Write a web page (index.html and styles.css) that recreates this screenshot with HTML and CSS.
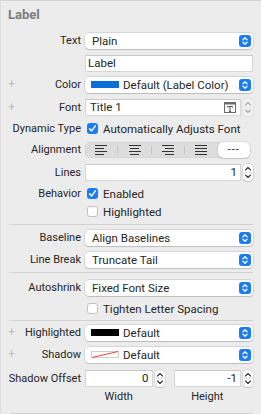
FILE: index.html
```html
<!DOCTYPE html>
<html lang="en">

<head>
    <meta charset="UTF-8">
    <meta name="viewport" content="width=device-width, initial-scale=1.0">
    <title>Attributes Inspector</title>

    <link rel="stylesheet" href="styles.css">
</head>

<body>
    <div class="inspector">
        <h2 class="title">Label</h2>

        <div class="row">
            <span class="name">Text</span>
            <div class="popup"><span class="value">Plain</span><span class="arrows"></span></div>
        </div>
        <div class="row gap-6">
            <span class="name"></span>
            <div class="field">Label</div>
        </div>
        <div class="row gap-4">
            <span class="name"><i class="plus">+</i>Color</span>
            <div class="popup"><span class="swatch blue"></span><span class="value">Default (Label Color)</span><span class="arrows"></span></div>
        </div>
        <div class="row gap-6">
            <span class="name"><i class="plus">+</i>Font</span>
            <div class="with-stepper">
                <div class="field font-field">Title 1
                    <svg class="t-icon" width="12" height="11" viewBox="0 0 12 11">
                        <rect x="0.5" y="0.5" width="11" height="10" fill="#fff" stroke="#6b6b6b" />
                        <rect x="0.5" y="0.5" width="11" height="2" fill="#6b6b6b" />
                        <path d="M3.5 4.5h5M6 4.5v5M5 9.5h2M3.5 4.5v1M8.5 4.5v1" stroke="#555" fill="none" />
                    </svg>
                </div>
                <span class="stepper disabled"></span>
            </div>
        </div>
        <div class="row gap-4">
            <span class="name">Dynamic Type</span>
            <label class="check"><span class="box on"></span>Automatically Adjusts Font</label>
        </div>
        <div class="row gap-4">
            <span class="name">Alignment</span>
            <div class="segmented">
                <span class="seg"><span class="lines left"><i></i><i></i><i></i><i></i></span></span>
                <span class="seg"><span class="lines center"><i></i><i></i><i></i><i></i></span></span>
                <span class="seg"><span class="lines right"><i></i><i></i><i></i><i></i></span></span>
                <span class="seg"><span class="lines justify"><i></i><i></i><i></i><i></i></span></span>
                <span class="seg selected">---</span>
            </div>
        </div>
        <div class="row gap-6">
            <span class="name">Lines</span>
            <div class="with-stepper">
                <div class="field num">1</div>
                <span class="stepper"></span>
            </div>
        </div>
        <div class="row gap-4">
            <span class="name">Behavior</span>
            <label class="check"><span class="box on"></span>Enabled</label>
        </div>
        <div class="row gap-1">
            <span class="name"></span>
            <label class="check"><span class="box"></span>Highlighted</label>
        </div>

        <hr class="sep">

        <div class="row gap-4">
            <span class="name">Baseline</span>
            <div class="popup"><span class="value">Align Baselines</span><span class="arrows"></span></div>
        </div>
        <div class="row">
            <span class="name">Line Break</span>
            <div class="popup"><span class="value">Truncate Tail</span><span class="arrows"></span></div>
        </div>

        <hr class="sep">

        <div class="row gap-6">
            <span class="name">Autoshrink</span>
            <div class="popup"><span class="value">Fixed Font Size</span><span class="arrows"></span></div>
        </div>
        <div class="row gap-4">
            <span class="name"></span>
            <label class="check"><span class="box"></span>Tighten Letter Spacing</label>
        </div>

        <hr class="sep short">

        <div class="row gap-3">
            <span class="name"><i class="plus">+</i>Highlighted</span>
            <div class="popup"><span class="swatch black"></span><span class="value">Default</span><span class="arrows"></span></div>
        </div>
        <div class="row">
            <span class="name"><i class="plus">+</i>Shadow</span>
            <div class="popup">
                <svg class="swatch" width="28" height="7" viewBox="0 0 28 7">
                    <rect x="0.5" y="0.5" width="27" height="6" fill="#fff" stroke="#cfcfcf" />
                    <path d="M1 6.5L27 0.5" stroke="#f0403a" stroke-width="1" />
                </svg>
                <span class="value">Default</span><span class="arrows"></span>
            </div>
        </div>
        <div class="row gap-7">
            <span class="name">Shadow Offset</span>
            <div class="pair">
                <div class="with-stepper">
                    <div class="field num">0</div>
                    <span class="stepper"></span>
                </div>
                <div class="with-stepper">
                    <div class="field num">-1</div>
                    <span class="stepper"></span>
                </div>
            </div>
        </div>
        <div class="row captions">
            <span class="name"></span>
            <div class="pair">
                <span class="caption">Width</span>
                <span class="caption">Height</span>
            </div>
        </div>

        <hr class="sep bottom">
    </div>
</body>

</html>
```

FILE: styles.css
```css
body {
    margin: 0;
    background-color: #ececec;
    font-family: Roboto, "Liberation Sans", sans-serif;
    color: #262626;
}

.inspector {
    width: 261px;
    height: 414px;
    box-sizing: border-box;
    border-top: 1px solid #d3d3d3;
    border-left: 1px solid #dedede;
    padding: 0 8px 0 0;
    overflow: hidden;
}

.title {
    margin: 0;
    padding: 6px 0 0 7px;
    height: 20px;
    font-size: 13px;
    font-weight: 700;
    color: #7d7d7d;
}

.row {
    display: grid;
    grid-template-columns: 80px 1fr;
    column-gap: 4px;
    align-items: center;
    height: 17px;
    margin-top: 5px;
}

.gap-1 { margin-top: 1px; }
.gap-3 { margin-top: 3px; }
.gap-4 { margin-top: 4px; }
.gap-6 { margin-top: 6px; }
.gap-7 { margin-top: 7px; }

.name {
    position: relative;
    text-align: right;
    font-size: 11px;
    white-space: nowrap;
}

.plus {
    position: absolute;
    left: 7px;
    top: -2px;
    font-style: normal;
    font-size: 13px;
    font-weight: 300;
    color: #a8a8a8;
}

.popup {
    display: flex;
    align-items: center;
    height: 16px;
    background-color: #fff;
    border-radius: 4px;
    box-shadow: 0 0 0 0.5px rgba(0, 0, 0, 0.18), 0 1px 1px rgba(0, 0, 0, 0.12);
    padding-left: 7px;
    font-size: 11.5px;
}

.value {
    flex: 1;
    white-space: nowrap;
}

.arrows {
    width: 12px;
    height: 12px;
    margin-right: 2px;
    border-radius: 3px;
    background-color: #1a7cf5;
    background-image: url("data:image/svg+xml,%3Csvg xmlns='http://www.w3.org/2000/svg' width='12' height='12' viewBox='0 0 12 12'%3E%3Cpath d='M4 4.8l2-2 2 2M4 7.2l2 2 2-2' stroke='white' stroke-width='1.3' fill='none' stroke-linecap='round' stroke-linejoin='round'/%3E%3C/svg%3E");
}

.swatch {
    display: block;
    width: 28px;
    height: 7px;
    margin-right: 4px;
    margin-left: -1px;
}

.swatch.blue {
    background-color: #0a6fd8;
}

.swatch.black {
    background-color: #000;
}

.field {
    box-sizing: border-box;
    height: 17px;
    background-color: #fff;
    border: 1px solid #d6d6d6;
    border-top-color: #c9c9c9;
    padding: 0 3px 0 2px;
    font-size: 11.5px;
    line-height: 15px;
}

.with-stepper {
    display: flex;
    align-items: center;
    gap: 2px;
}

.with-stepper .field {
    flex: 1;
}

.font-field {
    display: flex;
    align-items: center;
    justify-content: space-between;
    padding: 0 4px;
}

.t-icon {
    display: block;
}

.num {
    text-align: right;
}

.stepper {
    width: 10px;
    height: 17px;
    box-sizing: border-box;
    border-radius: 4px;
    background-color: #fff;
    box-shadow: 0 0 0 0.5px rgba(0, 0, 0, 0.2), 0 1px 1px rgba(0, 0, 0, 0.1);
    background-image: url("data:image/svg+xml,%3Csvg xmlns='http://www.w3.org/2000/svg' width='10' height='17' viewBox='0 0 10 17'%3E%3Cpath d='M2.5 6l2.5-2.5L7.5 6M2.5 11l2.5 2.5 2.5-2.5' stroke='%23333' stroke-width='1.1' fill='none' stroke-linecap='round' stroke-linejoin='round'/%3E%3Cpath d='M1 8.5h8' stroke='%23ddd' stroke-width='1'/%3E%3C/svg%3E");
}

.stepper.disabled {
    opacity: 0.35;
}

.check {
    display: flex;
    align-items: center;
    gap: 5px;
    padding-left: 2px;
    font-size: 11.5px;
    white-space: nowrap;
}

.box {
    width: 11px;
    height: 11px;
    box-sizing: border-box;
    border-radius: 3px;
    background-color: #fff;
    border: 1px solid #c3c3c3;
}

.box.on {
    border: none;
    background-color: #1a7cf5;
    background-image: url("data:image/svg+xml,%3Csvg xmlns='http://www.w3.org/2000/svg' width='11' height='11' viewBox='0 0 11 11'%3E%3Cpath d='M2.6 5.8l2 2.1 3.8-5' stroke='white' stroke-width='1.5' fill='none' stroke-linecap='round' stroke-linejoin='round'/%3E%3C/svg%3E");
}

.segmented {
    display: flex;
    height: 16px;
    margin-right: 3px;
    border-radius: 5px;
    background-color: #dddddd;
    box-shadow: inset 0 0 0 0.5px rgba(0, 0, 0, 0.06);
}

.seg {
    flex: 1;
    display: flex;
    align-items: center;
    justify-content: center;
    border-right: 1px solid #c6c6c6;
    margin: 4px 0;
}

.seg:nth-child(4) {
    border-right: none;
}

.seg.selected {
    margin: 0;
    border-right: none;
    background-color: #fff;
    border-radius: 5px;
    box-shadow: 0 0 0 0.5px rgba(0, 0, 0, 0.15), 0 1px 1px rgba(0, 0, 0, 0.1);
    font-size: 11px;
    letter-spacing: 1px;
}

.lines {
    display: flex;
    flex-direction: column;
    gap: 2px;
    width: 12px;
}

.lines i {
    height: 1px;
    width: 12px;
    background-color: #333;
}

.lines.left i:nth-child(even),
.lines.center i:nth-child(even),
.lines.right i:nth-child(even) {
    width: 9px;
}

.lines.center {
    align-items: center;
}

.lines.right {
    align-items: flex-end;
}

.sep {
    margin: 4px 0 0 9px;
    border: none;
    border-top: 1px solid #d1d1d1;
}

.sep.short {
    margin-top: 3px;
}

.pair {
    display: grid;
    grid-template-columns: 1fr 1fr;
    column-gap: 9px;
}

.captions {
    margin-top: 3px;
    height: 12px;
}

.caption {
    text-align: center;
    font-size: 11px;
    padding-right: 12px;
}

.sep.bottom {
    margin-top: 11px;
}
```
